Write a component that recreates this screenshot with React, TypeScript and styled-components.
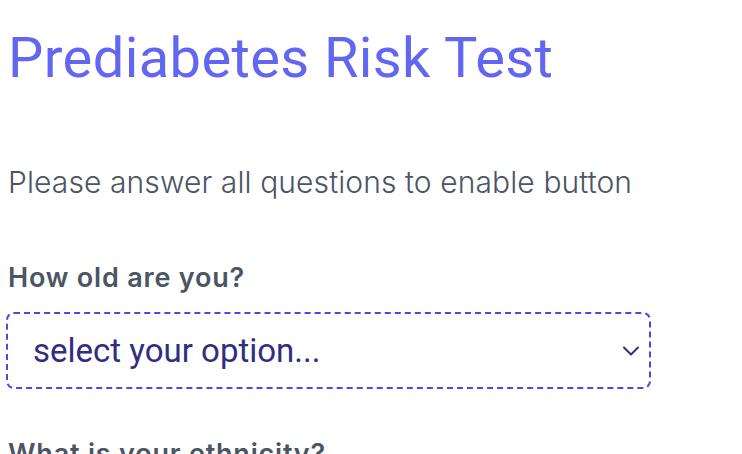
import React from "react";
import styled, { createGlobalStyle } from "styled-components";

const Global = createGlobalStyle`
  html, body { margin: 0; padding: 0; background: #ffffff; }
  body { font-family: Roboto, "Noto Sans", sans-serif; }
`;

const Page = styled.main`
  padding: 0 8px;
  display: flex;
  flex-direction: column;
`;

const Title = styled.h1`
  margin: 24px 0 0 0;
  font-family: Roboto, sans-serif;
  font-size: 56px;
  line-height: 68px;
  font-weight: 400;
  letter-spacing: 0.4px;
  color: #6366f1;
`;

const Intro = styled.p`
  margin: 70px 0 0 0;
  font-family: Inter, sans-serif;
  font-size: 30px;
  line-height: 40px;
  font-weight: 300;
  letter-spacing: 0.1px;
  color: #4b5563;
`;

const Field = styled.div`
  display: flex;
  flex-direction: column;
  gap: 18px;
  margin-top: ${(p: { $top: number }) => p.$top}px;
`;

const Label = styled.label`
  font-family: Inter, sans-serif;
  font-size: 27px;
  line-height: 32px;
  font-weight: 600;
  letter-spacing: 0.8px;
  color: #4b5563;
`;

const SelectBox = styled.div`
  width: 645px;
  height: 77px;
  margin-left: -2px;
  box-sizing: border-box;
  border: 2px dashed #4f46e5;
  border-radius: 8px;
  display: flex;
  align-items: center;
  justify-content: space-between;
  padding: 0 8px 0 25px;
  color: #312e81;
  font-family: Roboto, sans-serif;
  font-size: 33px;
`;

const Chevron = () => (
  <svg width="20" height="20" viewBox="0 0 20 20" fill="none">
    <path d="M3 6.5l7 7 7-7" stroke="#312e81" strokeWidth="2" strokeLinecap="round" strokeLinejoin="round" />
  </svg>
);

export default function App() {
  return (
    <>
      <Global />
      <Page>
        <Title>Prediabetes Risk Test</Title>
        <Intro>Please answer all questions to enable button</Intro>
        <Field $top={60}>
          <Label>How old are you?</Label>
          <SelectBox>
            <span>select your option...</span>
            <Chevron />
          </SelectBox>
        </Field>
        <Field $top={49}>
          <Label>What is your ethnicity?</Label>
        </Field>
      </Page>
    </>
  );
}
